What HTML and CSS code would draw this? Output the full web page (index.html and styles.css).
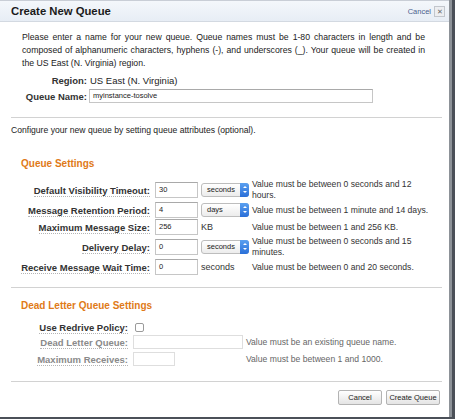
FILE: index.html
```html
<!DOCTYPE html>
<html>
<head>
<meta charset="utf-8">
<link rel="stylesheet" href="styles.css">
</head>
<body>
<div class="dialog">
  <div class="header">
    <span class="title">Create New Queue</span>
    <span class="close"><span class="close-link">Cancel</span><span class="close-box">✕</span></span>
  </div>
  <p class="intro">Please enter a name for your new queue. Queue names must be 1-80 characters in length and be composed of alphanumeric characters, hyphens (-), and underscores (_). Your queue will be created in the US East (N. Virginia) region.</p>
  <div class="namerow first">
    <span class="nlabel">Region:</span>
    <span class="nvalue">US East (N. Virginia)</span>
  </div>
  <div class="namerow">
    <span class="nlabel">Queue Name:</span>
    <span class="input wide">myinstance-tosolve</span>
  </div>
  <div class="rule r1"></div>
  <p class="configure">Configure your new queue by setting queue attributes (optional).</p>
  <h3 class="section qs">Queue Settings</h3>
  <div class="settings">
    <div class="srow">
      <span class="slabel"><span class="dot">Default Visibility Timeout:</span></span>
      <span class="input num">30</span>
      <span class="select">seconds<span class="arrow"></span></span>
      <span class="help">Value must be between 0 seconds and 12 hours.</span>
    </div>
    <div class="srow">
      <span class="slabel"><span class="dot">Message Retention Period:</span></span>
      <span class="input num">4</span>
      <span class="select">days<span class="arrow"></span></span>
      <span class="help">Value must be between 1 minute and 14 days.</span>
    </div>
    <div class="srow">
      <span class="slabel"><span class="dot">Maximum Message Size:</span></span>
      <span class="input num">256</span>
      <span class="unit">KB</span>
      <span class="help">Value must be between 1 and 256 KB.</span>
    </div>
    <div class="srow">
      <span class="slabel"><span class="dot">Delivery Delay:</span></span>
      <span class="input num">0</span>
      <span class="select">seconds<span class="arrow"></span></span>
      <span class="help">Value must be between 0 seconds and 15 minutes.</span>
    </div>
    <div class="srow">
      <span class="slabel"><span class="dot">Receive Message Wait Time:</span></span>
      <span class="input num">0</span>
      <span class="unit">seconds</span>
      <span class="help">Value must be between 0 and 20 seconds.</span>
    </div>
  </div>
  <div class="rule r2"></div>
  <h3 class="section dl">Dead Letter Queue Settings</h3>
  <div class="dlq">
    <div class="drow d1">
      <span class="dlabel"><span class="dot">Use Redrive Policy:</span></span>
      <span class="check"></span>
      <span></span>
    </div>
    <div class="drow d2">
      <span class="dlabel off"><span class="dot">Dead Letter Queue:</span></span>
      <span class="input dis long"></span>
      <span class="dhelp">Value must be an existing queue name.</span>
    </div>
    <div class="drow d3">
      <span class="dlabel off"><span class="dot">Maximum Receives:</span></span>
      <span class="input dis short"></span>
      <span class="dhelp">Value must be between 1 and 1000.</span>
    </div>
  </div>
  <div class="rule r3"></div>
  <div class="buttons">
    <span class="btn cancel">Cancel</span>
    <span class="btn create">Create Queue</span>
  </div>
</div>
</body>
</html>
```
FILE: styles.css
```css
html, body {
  margin: 0;
  padding: 0;
}
body {
  width: 455px;
  height: 419px;
  overflow: hidden;
  background: #4b5058;
  font-family: "Liberation Sans", Arial, sans-serif;
  font-size: 9.5px;
  color: #222;
}
.dialog {
  width: 452px;
  height: 417px;
  background: #fff;
  border-right: 3px solid #8d9298;
  box-sizing: border-box;
  overflow: hidden;
}
.header {
  height: 22px;
  box-sizing: border-box;
  background: linear-gradient(#f4f7fb, #e7edf5);
  border-bottom: 1px solid #d3d9e1;
  border-top: 1px solid #c9ced6;
  display: flex;
  align-items: center;
  justify-content: space-between;
  padding: 0 4px 0 11px;
}
.title {
  font-weight: bold;
  font-size: 11.3px;
  color: #1a1a1a;
}
.close {
  display: flex;
  align-items: center;
  gap: 3px;
}
.close-link {
  font-size: 7.5px;
  color: #4b5f8e;
}
.close-box {
  width: 9px;
  height: 9px;
  border: 1px solid #c2c6cc;
  background: #eceef1;
  color: #666;
  font-size: 7px;
  line-height: 9px;
  text-align: center;
}
.intro {
  margin: 9px 0 0 22px;
  width: 403px;
  font-size: 8.7px;
  line-height: 13px;
  text-align: justify;
}
.namerow {
  display: flex;
  align-items: center;
  height: 14px;
  margin-top: 2px;
}
.namerow.first {
  margin-top: 3px;
}
.nlabel {
  width: 87px;
  text-align: right;
  font-weight: bold;
  color: #333;
}
.nvalue {
  margin-left: 3px;
}
.input {
  display: inline-block;
  box-sizing: border-box;
  border: 1px solid #c6c6c6;
  border-top-color: #a9a9a9;
  background: #fff;
  font-size: 7.5px;
  padding-left: 3px;
  color: #222;
}
.input.wide {
  margin-left: 2px;
  width: 284px;
  height: 14px;
  line-height: 12px;
}
.rule {
  height: 1px;
  background: #d2d2d2;
  margin-left: 11px;
  width: 431px;
}
.r1 { margin-top: 14px; }
.configure {
  margin: 6px 0 0 11px;
  font-size: 8.6px;
  line-height: 13px;
}
.section {
  margin: 0 0 0 21px;
  font-size: 10px;
  font-weight: bold;
  color: #e07a17;
  line-height: 13px;
}
.qs { margin-top: 20px; }
.settings {
  margin-top: 9px;
  display: flex;
  flex-direction: column;
  gap: 1px;
}
.srow {
  display: grid;
  grid-template-columns: 150px 48px 51px 1fr;
  align-items: center;
  min-height: 16px;
}
.slabel, .dlabel {
  text-align: right;
  font-weight: bold;
  color: #333;
}
.dot {
  border-bottom: 1px dotted #b5b5b5;
}
.srow .input {
  margin-left: 5px;
  width: 43px;
  height: 16px;
  line-height: 14px;
}
.select {
  position: relative;
  box-sizing: border-box;
  height: 14px;
  width: 48px;
  margin-left: 3px;
  border: 1px solid #bdbdbd;
  border-radius: 3px;
  background: linear-gradient(#ffffff, #ececec);
  font-size: 7.5px;
  line-height: 12px;
  padding-left: 5px;
  color: #222;
}
.arrow {
  position: absolute;
  right: -1px;
  top: -1px;
  width: 9px;
  height: 14px;
  border-radius: 0 3px 3px 0;
  background: linear-gradient(#5aa0f0, #2a6fd8);
}
.arrow::before, .arrow::after {
  content: "";
  position: absolute;
  left: 2.5px;
  border-left: 2px solid transparent;
  border-right: 2px solid transparent;
}
.arrow::before {
  top: 3px;
  border-bottom: 2.5px solid #fff;
}
.arrow::after {
  top: 8px;
  border-top: 2.5px solid #fff;
}
.unit {
  padding-left: 3px;
  font-size: 9px;
  color: #333;
}
.help {
  margin-left: 3px;
  line-height: 11px;
  font-size: 8.6px;
  color: #333;
  width: 182px;
}
.r2 { margin-top: 12px; }
.dl { margin-top: 11px; }
.dlq {
  margin-top: 8px;
}
.drow {
  display: grid;
  grid-template-columns: 128px 110px 1fr;
  column-gap: 5px;
  align-items: center;
  height: 14px;
}
.d2 { margin-top: 1px; }
.d3 { margin-top: 3px; }
.dlabel.off {
  color: #8a8a8a;
}
.check {
  margin-left: 2px;
  width: 9px;
  height: 9px;
  box-sizing: border-box;
  border: 1px solid #9a9a9a;
  border-radius: 2px;
  background: #fff;
}
.input.dis {
  height: 14px;
  border-color: #dedede;
}
.input.long { width: 110px; }
.input.short { width: 42px; }
.dhelp {
  margin-left: -2px;
  font-size: 8.6px;
  color: #666;
}
.r3 { margin-top: 15px; }
.buttons {
  margin-top: 8px;
  display: flex;
  justify-content: flex-end;
  gap: 4px;
  padding-right: 9px;
}
.btn {
  height: 15px;
  box-sizing: border-box;
  border: 1px solid #b3b3b3;
  border-radius: 2px;
  background: linear-gradient(#ffffff, #e4e4e4);
  font-size: 7.5px;
  line-height: 13px;
  text-align: center;
  color: #222;
}
.cancel { width: 44px; }
.create { width: 54px; }
```
